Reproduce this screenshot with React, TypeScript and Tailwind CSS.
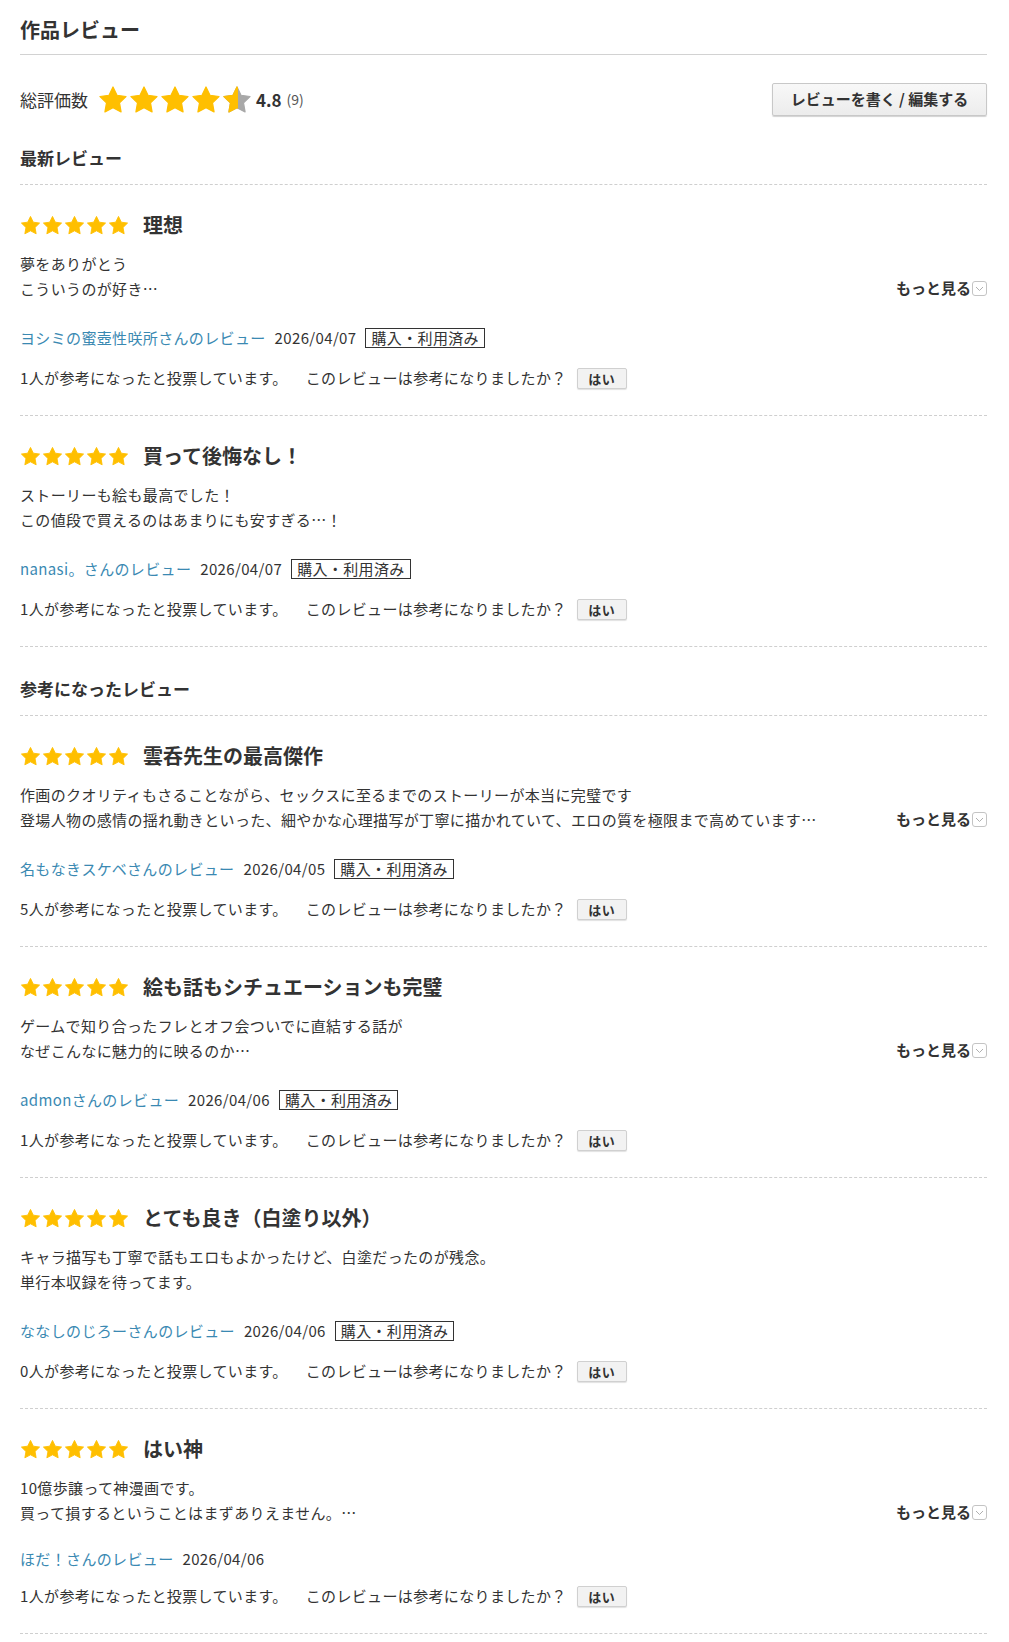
import React from "react";

type Review = {
  title: string;
  body: string[];
  more: boolean;
  reviewer: string;
  date: string;
  purchased: boolean;
  votes: number;
};

const latestReviews: Review[] = [
  {
    title: "理想",
    body: ["夢をありがとう", "こういうのが好き…"],
    more: true,
    reviewer: "ヨシミの蜜壺性咲所さんのレビュー",
    date: "2026/04/07",
    purchased: true,
    votes: 1,
  },
  {
    title: "買って後悔なし！",
    body: ["ストーリーも絵も最高でした！", "この値段で買えるのはあまりにも安すぎる…！"],
    more: false,
    reviewer: "nanasi。さんのレビュー",
    date: "2026/04/07",
    purchased: true,
    votes: 1,
  },
];

const helpfulReviews: Review[] = [
  {
    title: "雲呑先生の最高傑作",
    body: [
      "作画のクオリティもさることながら、セックスに至るまでのストーリーが本当に完璧です",
      "登場人物の感情の揺れ動きといった、細やかな心理描写が丁寧に描かれていて、エロの質を極限まで高めています…",
    ],
    more: true,
    reviewer: "名もなきスケベさんのレビュー",
    date: "2026/04/05",
    purchased: true,
    votes: 5,
  },
  {
    title: "絵も話もシチュエーションも完璧",
    body: ["ゲームで知り合ったフレとオフ会ついでに直結する話が", "なぜこんなに魅力的に映るのか…"],
    more: true,
    reviewer: "admonさんのレビュー",
    date: "2026/04/06",
    purchased: true,
    votes: 1,
  },
  {
    title: "とても良き（白塗り以外）",
    body: ["キャラ描写も丁寧で話もエロもよかったけど、白塗だったのが残念。", "単行本収録を待ってます。"],
    more: false,
    reviewer: "ななしのじろーさんのレビュー",
    date: "2026/04/06",
    purchased: true,
    votes: 0,
  },
  {
    title: "はい神",
    body: ["10億歩譲って神漫画です。", "買って損するということはまずありえません。…"],
    more: true,
    reviewer: "ほだ！さんのレビュー",
    date: "2026/04/06",
    purchased: false,
    votes: 1,
  },
];

const STAR =
  "M12 1.6l3.2 6.6 7.2 1-5.2 5.1 1.25 7.2L12 18.1l-6.45 3.4 1.25-7.2L1.6 9.2l7.2-1z";

function Star({ size, fill = 1, id }: { size: number; fill?: number; id?: string }) {
  if (fill >= 1) {
    return (
      <svg width={size} height={size} viewBox="0 0 24 24">
        <path d={STAR} fill="#ffbf00" stroke="#ffbf00" strokeWidth="1" strokeLinejoin="round" />
      </svg>
    );
  }
  return (
    <svg width={size} height={size} viewBox="0 0 24 24">
      <defs>
        <clipPath id={id}>
          <rect x="0" y="0" width={24 * fill} height="24" />
        </clipPath>
      </defs>
      <path d={STAR} fill="#a8a8a8" stroke="#a8a8a8" strokeWidth="1" strokeLinejoin="round" />
      <path
        d={STAR}
        fill="#ffbf00"
        stroke="#ffbf00"
        strokeWidth="1"
        strokeLinejoin="round"
        clipPath={`url(#${id})`}
      />
    </svg>
  );
}

function MoreIcon() {
  return (
    <svg width="15" height="15" viewBox="0 0 15 15" className="ml-[1px]">
      <rect x="0.5" y="0.5" width="14" height="14" rx="2.5" fill="#fff" stroke="#c4c4c4" />
      <path d="M4 6l3.5 3.5L11 6" fill="none" stroke="#b0b0b0" strokeWidth="1" />
    </svg>
  );
}

function ReviewItem({ review }: { review: Review }) {
  return (
    <div className="border-b border-dashed border-[#cfcfcf] pt-[27px] pb-[25px]">
      <div className="flex h-[26px] items-center">
        <div className="flex gap-[1px]">
          {[0, 1, 2, 3, 4].map((i) => (
            <Star key={i} size={21} />
          ))}
        </div>
        <h3 className="ml-[14px] text-[20px] font-bold leading-[26px] text-[#333]">{review.title}</h3>
      </div>

      <div className="mt-[13px] flex items-end justify-between">
        <div className="text-[15px] leading-[25px] tracking-[0.35px] text-[#333]">
          {review.body.map((line) => (
            <p key={line}>{line}</p>
          ))}
        </div>
        {review.more ? (
          <a className="flex h-[25px] items-center text-[15px] font-bold text-[#333]">
            もっと見る
            <MoreIcon />
          </a>
        ) : null}
      </div>

      <div
        className={`mt-[23px] flex items-center text-[15px] leading-[22px] tracking-[0.35px] ${
          review.purchased ? "h-[28px]" : "h-[22px]"
        }`}
      >
        <a className="text-[#3a89b2]">{review.reviewer}</a>
        <span className="ml-[9px] text-[#333]">{review.date}</span>
        {review.purchased ? (
          <span className="ml-[9px] flex h-[20px] items-center border border-[#333] px-[5px] text-[15px] leading-[18px] text-[#333]">
            購入・利用済み
          </span>
        ) : null}
      </div>

      <div className="mt-[14px] flex h-[24px] items-center text-[15px] tracking-[0.35px] text-[#333]">
        <span>{review.votes}人が参考になったと投票しています。</span>
        <span className="ml-[18px]">このレビューは参考になりましたか？</span>
        <button
          type="button"
          className="ml-[10px] h-[21px] w-[50px] rounded-[2px] border border-[#d0d0d0] bg-[#f2f2f2] text-[13px] font-bold leading-[19px] text-[#333] shadow-[0_1px_1px_rgba(0,0,0,0.12)]"
        >
          はい
        </button>
      </div>
    </div>
  );
}

function SectionHeading({ children }: { children: React.ReactNode }) {
  return (
    <h2 className="border-b border-dashed border-[#cfcfcf] pt-[30px] pb-[14px] text-[17px] font-bold leading-[24px] text-[#333]">
      {children}
    </h2>
  );
}

export default function App() {
  return (
    <div className="min-h-[1642px] bg-white font-['Noto_Sans_CJK_JP','Noto_Sans',sans-serif] text-[#333]">
      <div className="ml-[20px] w-[967px] pt-[16px]">
        <h1 className="border-b border-[#d2d2d2] pb-[10px] text-[20px] font-bold leading-[28px] text-[#333]">
          作品レビュー
        </h1>

        <div className="mt-[28px] flex h-[33px] items-center justify-between">
          <div className="flex items-center">
            <span className="text-[17px] leading-[24px]">総評価数</span>
            <div className="ml-[10px] flex gap-[1px]">
              {[0, 1, 2, 3].map((i) => (
                <Star key={i} size={30} />
              ))}
              <Star size={30} fill={0.53} id="half-star" />
            </div>
            <span className="ml-[4px] text-[17px] font-bold">4.8</span>
            <span className="ml-[5px] text-[14px] text-[#555]">(9)</span>
          </div>
          <button
            type="button"
            className="h-[33px] w-[215px] rounded-[2px] border border-[#c8c8c8] bg-gradient-to-b from-[#f8f8f8] to-[#ececec] text-[15px] font-bold text-[#333] shadow-[0_1px_1px_rgba(0,0,0,0.18)]"
          >
            レビューを書く / 編集する
          </button>
        </div>

        <SectionHeading>最新レビュー</SectionHeading>
        {latestReviews.map((review) => (
          <ReviewItem key={review.title} review={review} />
        ))}

        <SectionHeading>参考になったレビュー</SectionHeading>
        {helpfulReviews.map((review) => (
          <ReviewItem key={review.title} review={review} />
        ))}
      </div>
    </div>
  );
}
